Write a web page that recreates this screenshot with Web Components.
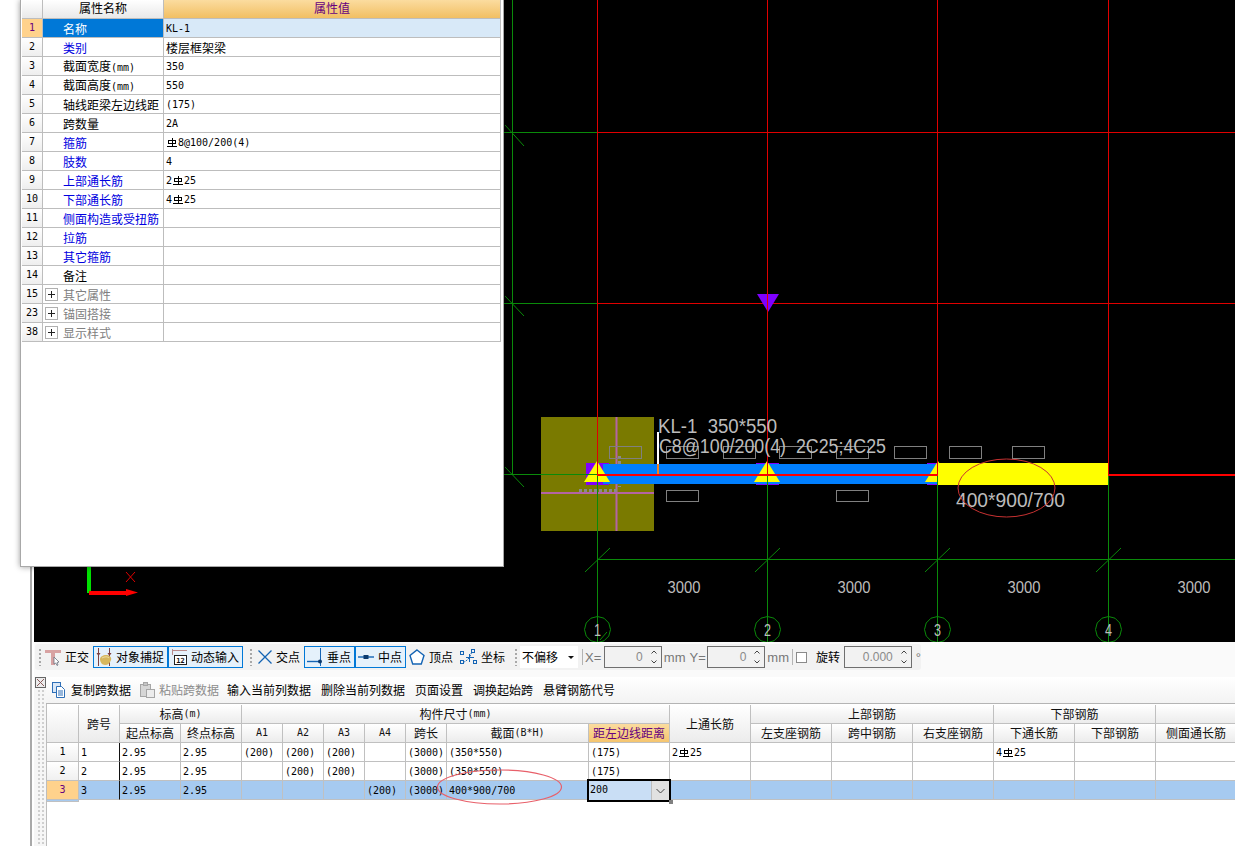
<!DOCTYPE html>
<html lang="zh">
<head>
<meta charset="utf-8">
<title>KL-1</title>
<style>
  html, body { margin: 0; height: 100%; overflow: hidden; background: #fff; }
</style>
</head>
<body>
<cad-app></cad-app>
<script>
const CJK = '"Noto Sans CJK SC", "Liberation Sans", sans-serif';
const MONO_CSS = `.m { font: 10px/1 "DejaVu Sans Mono", "Liberation Mono", monospace; opacity: .99; }`;

// ascii runs go in the small mono font, Φ becomes the rebar grade mark
function fmt(text) {
  return text
    .replace(/[!-~]+/g, (s) => `<span class="m">${s}</span>`)
    .replace(/Φ/g, "<rebar-mark></rebar-mark>");
}

class RebarMark extends HTMLElement {
  constructor() {
    super();
    this.attachShadow({ mode: "open" });
    this.shadowRoot.innerHTML = `
      <style>
        :host { display: inline-block; width: 12px; height: 11px; vertical-align: -1px; }
        svg { display: block; }
      </style>
      <svg width="12" height="11" viewBox="0 0 12 11" shape-rendering="crispEdges" fill="none" stroke="#000">
        <path d="M2.5 3.5h7v3h-7zM6 1v9M1 9.5h10"/>
      </svg>
    `;
  }
}

class GripDots extends HTMLElement {
  constructor() {
    super();
    this.attachShadow({ mode: "open" });
    this.shadowRoot.innerHTML = `
      <style>
        :host {
          display: block;
          width: 3px;
          height: 17px;
          background: conic-gradient(#a8a8a8 25%, transparent 0) 0 0 / 3px 4px;
        }
      </style>
    `;
  }
}

class ToolBtn extends HTMLElement {
  constructor() {
    super();
    this.attachShadow({ mode: "open" });
    this.shadowRoot.innerHTML = `
      <style>
        :host {
          display: flex;
          flex: none;
          box-sizing: border-box;
          height: 22px;
          align-items: center;
          gap: 4px;
          padding: 0 2px;
          border: 1px solid transparent;
          font: 12px/1 ${CJK};
          color: #000;
          white-space: nowrap;
        }
        :host([active]) { border-color: #0078d7; background: #e5f1fb; }
        :host([disabled]) { color: #8c8c8c; }
        ::slotted(svg) { display: block; flex: none; }
      </style>
      <slot name="icon"></slot><slot></slot>
    `;
  }
}

class SpinBox extends HTMLElement {
  constructor() {
    super();
    this.attachShadow({ mode: "open" });
    this.shadowRoot.innerHTML = `
      <style>
        :host {
          display: flex;
          flex: none;
          box-sizing: border-box;
          height: 22px;
          align-items: center;
          justify-content: flex-end;
          border: 1px solid #6f6f6f;
          background: #f2f2f2;
          color: #8a8a8a;
          font: 12px/1 "Liberation Sans", sans-serif;
        }
        svg { display: block; margin: 0 1px 0 5px; }
      </style>
      <span>${this.getAttribute("value") || "0"}</span>
      <svg width="12" height="18" viewBox="0 0 12 18" fill="none" stroke="#444">
        <path d="M3.5 5.5L6 3l2.5 2.5M3.5 12.500L6 15l2.500-2.500"/>
      </svg>
    `;
  }
}

class SnapToolbar extends HTMLElement {
  constructor() {
    super();
    this.attachShadow({ mode: "open" });
    this.shadowRoot.innerHTML = `
      <style>
        :host {
          display: block;
          box-sizing: border-box;
          height: 35px;
          padding: 2px 0 0 1px;
          background: #fafafa;
        }
        .bar {
          display: flex;
          align-items: center;
          width: 886px;
          height: 26px;
          padding-left: 3px;
          box-sizing: border-box;
          background: #f2f2f2;
          border-radius: 3px;
          font: 13px/1 "Liberation Sans", sans-serif;
          color: #777;
          white-space: nowrap;
        }
        grip-dots { flex: none; }
        .drop {
          flex: none;
          box-sizing: border-box;
          display: flex;
          align-items: center;
          justify-content: space-between;
          width: 58px;
          height: 22px;
          padding: 0 4px 0 2px;
          background: #fff;
          font: 12px/1 ${CJK};
          color: #000;
        }
        .drop i { width: 0; height: 0; border: 3px solid transparent; border-top: 3px solid #111; border-bottom: 0; }
        .sep { flex: none; width: 1px; height: 16px; background: #b4b4b4; }
        .check { flex: none; box-sizing: border-box; width: 11px; height: 11px; border: 1px solid #8a8a8a; background: #fff; }
        .cn { font: 12px/1 ${CJK}; color: #000; }
      </style>
      <div class="bar">
        <grip-dots></grip-dots>
        <tool-btn style="width:51px;margin-left:1px">
          <svg slot="icon" width="16" height="18" viewBox="0 0 16 18">
            <path d="M0 2h16v3h-6v12H6V5H0z" fill="#d8a2a2"/>
            <path d="M9 9l5 5-2 .5 1 2.500-1 .5-1.200-2.500L9 16z" fill="#fff" stroke="#6b7280" stroke-width=".8"/>
          </svg>正交</tool-btn>
        <tool-btn active style="width:75px">
          <svg slot="icon" width="16" height="18" viewBox="0 0 16 18">
            <path d="M2.500 0v18M13.500 0v18" stroke="#7d4040" fill="none"/>
            <path d="M.5 5h4l-2 3zM11.500 5h4l-2 3z" fill="#7d4040"/>
            <path d="M4 11c0-2 3-4 6-4s6 2 5 5-3 5-6 5-5-3-5-6z" fill="#d6b75e"/>
            <path d="M6 10c2-1 5-2 7 0" stroke="#f1e3b0" fill="none"/>
          </svg>对象捕捉</tool-btn>
        <tool-btn active style="width:75px">
          <svg slot="icon" width="16" height="18" viewBox="0 0 16 18" shape-rendering="crispEdges">
            <path d="M1.500 1v6M.5 2.500h15" stroke="#b98a8a" fill="none"/>
            <rect x="3.500" y="7.500" width="12" height="9" fill="#fff" stroke="#222"/>
            <text x="9.500" y="15" text-anchor="middle" font-family="DejaVu Sans Mono" font-size="7" font-weight="700" fill="#111">12</text>
          </svg>动态输入</tool-btn>
        <grip-dots style="margin-left:6px"></grip-dots>
        <tool-btn style="width:50px;margin-left:2px;gap:3px">
          <svg slot="icon" width="16" height="16" viewBox="0 0 16 16">
            <path d="M1.500 1.500l13 13M14.500 1.500l-13 13" stroke="#1464b4" stroke-width="1.300"/>
          </svg>交点</tool-btn>
        <tool-btn active style="width:51px">
          <svg slot="icon" width="16" height="18" viewBox="0 0 16 18">
            <path d="M0 13.500h13" stroke="#1464b4" stroke-width="1.400"/>
            <path d="M13.500 0v18" stroke="#1464b4"/>
            <circle cx="13" cy="13.500" r="2" fill="#0b3a6e"/>
          </svg>垂点</tool-btn>
        <tool-btn active style="width:51px">
          <svg slot="icon" width="16" height="16" viewBox="0 0 16 16">
            <path d="M0 8h16" stroke="#1464b4" stroke-width="1.400"/>
            <rect x="5.500" y="6" width="5" height="4" fill="#0b3a6e"/>
          </svg>中点</tool-btn>
        <tool-btn style="width:51px">
          <svg slot="icon" width="16" height="16" viewBox="0 0 16 16">
            <path d="M8 1l7 5.500-2.700 8.500H3.700L1 6.500z" fill="#fff" stroke="#1464b4" stroke-width="1.400"/>
          </svg>顶点</tool-btn>
        <tool-btn style="width:51px">
          <svg slot="icon" width="17" height="18" viewBox="0 0 17 18" fill="none" stroke="#1464b4" stroke-width="1">
            <path d="M3 14.500C7 13 10 10 12 3" stroke-dasharray="2 1"/>
            <path d="M6 9.500h8M9.500 6v8"/>
            <rect x=".5" y="12.500" width="3" height="3"/>
            <rect x="11.500" y="1.500" width="3" height="3"/>
            <rect x="13.500" y="12.500" width="3" height="3"/>
            <rect x=".5" y="3.500" width="3" height="3"/>
          </svg>坐标</tool-btn>
        <grip-dots style="margin-left:6px"></grip-dots>
        <div class="drop" style="margin-left:3px">不偏移<i></i></div>
        <div class="sep" style="margin-left:4px"></div>
        <span style="margin-left:2px;width:19px">X=</span>
        <spin-box value="0" style="width:58px"></spin-box>
        <span style="margin-left:2px;width:26px">mm</span>
        <span style="width:18px">Y=</span>
        <spin-box value="0" style="width:58px"></spin-box>
        <span style="margin-left:2px;width:25px">mm</span>
        <div class="sep"></div>
        <div class="check" style="margin-left:3px"></div>
        <span class="cn" style="margin-left:9px;width:28px">旋转</span>
        <spin-box value="0.000" style="width:68px"></spin-box>
        <span style="margin-left:4px">°</span>
      </div>
    `;
  }
}

class SpanToolbar extends HTMLElement {
  constructor() {
    super();
    this.attachShadow({ mode: "open" });
    this.shadowRoot.innerHTML = `
      <style>
        :host {
          display: flex;
          align-items: center;
          box-sizing: border-box;
          height: 27px;
          padding: 0 0 0 2px;
          background: linear-gradient(#fff, #f3f3f3);
          border-bottom: 1px solid #b4b4b4;
        }
      </style>
      <tool-btn style="width:88px">
        <svg slot="icon" width="16" height="16" viewBox="0 0 16 16">
          <rect x="1.500" y=".5" width="8" height="10" fill="#dbe8f7" stroke="#2e6fb7"/>
          <path d="M5.500 4.500h5l3 3v8h-8z" fill="#fff" stroke="#2e6fb7"/>
          <path d="M7 9h5M7 11h5M7 13h5" stroke="#2e6fb7"/>
        </svg>复制跨数据</tool-btn>
      <tool-btn disabled style="width:88px">
        <svg slot="icon" width="16" height="16" viewBox="0 0 16 16">
          <rect x="1.500" y="2.500" width="10" height="12" fill="#d6d6d6" stroke="#a6a6a6"/>
          <rect x="4.500" y=".5" width="4" height="3" fill="#c4c4c4" stroke="#a6a6a6"/>
          <rect x="7.500" y="7.500" width="8" height="8" fill="#ececec" stroke="#a6a6a6"/>
        </svg>粘贴跨数据</tool-btn>
      <tool-btn style="width:94px">输入当前列数据</tool-btn>
      <tool-btn style="width:94px">删除当前列数据</tool-btn>
      <tool-btn style="width:58px">页面设置</tool-btn>
      <tool-btn style="width:70px">调换起始跨</tool-btn>
      <tool-btn style="width:78px">悬臂钢筋代号</tool-btn>
    `;
  }
}

class SpanGrid extends HTMLElement {
  constructor() {
    super();
    this.attachShadow({ mode: "open" });

    const heads = [
      ["", 1, 1, 1, 2],
      ["跨号", 2, 1, 1, 2],
      ["标高(m)", 3, 1, 2, 1],
      ["构件尺寸(mm)", 5, 1, 7, 1],
      ["上通长筋", 12, 1, 1, 2],
      ["上部钢筋", 13, 1, 3, 1],
      ["下部钢筋", 16, 1, 2, 1],
      ["", 18, 1, 1, 1],
      ["起点标高", 3, 2],
      ["终点标高", 4, 2],
      ["A1", 5, 2],
      ["A2", 6, 2],
      ["A3", 7, 2],
      ["A4", 8, 2],
      ["跨长", 9, 2],
      ["截面(B*H)", 10, 2],
      ["距左边线距离", 11, 2, 1, 1, "pick"],
      ["左支座钢筋", 13, 2],
      ["跨中钢筋", 14, 2],
      ["右支座钢筋", 15, 2],
      ["下通长筋", 16, 2],
      ["下部钢筋", 17, 2],
      ["侧面通长筋", 18, 2],
    ];
    const rows = [
      ["1", "1", "2.95", "2.95", "(200)", "(200)", "(200)", "", "(3000)", "(350*550)", "(175)", "2Φ25", "", "", "", "4Φ25", "", ""],
      ["2", "2", "2.95", "2.95", "", "(200)", "(200)", "", "(3000)", "(350*550)", "(175)", "", "", "", "", "", "", ""],
      ["3", "3", "2.95", "2.95", "", "", "", "(200)", "(3000)", "400*900/700", "", "", "", "", "", "", "", ""],
    ];

    let cells = "";
    for (const [text, col, row, cs = 1, rs = 1, cls = ""] of heads) {
      cells += `<div class="h ${cls}" style="grid-area:${row}/${col}/span ${rs}/span ${cs}">${fmt(text)}</div>`;
    }
    rows.forEach((row, r) => {
      row.forEach((text, c) => {
        let cls = c === 0 ? "n" : "c";
        if (r === 2) cls += " sel";
        if (c === 1) cls += " froz";
        cells += `<div class="${cls}">${fmt(text)}</div>`;
      });
    });

    this.shadowRoot.innerHTML = `
      <style>
        :host {
          display: block;
          position: relative;
          height: 143px;
          overflow: hidden;
          padding-top: 1px;
          box-sizing: border-box;
          background: #fff;
          border-left: 1px solid #bdbdbd;
          font: 12px/1 ${CJK};
          color: #000;
        }
        ${MONO_CSS}
        .grid {
          display: grid;
          grid-template-columns: 32px 41px 61px 61px 41px 41px 41px 41px 41px 142px 81px 81px 81px 81px 81px 81px 81px 81px;
          grid-template-rows: 19px 19px 19px 19px 19px;
          width: max-content;
        }
        .grid > div {
          box-sizing: border-box;
          display: flex;
          align-items: center;
          border-right: 1px solid #c0c0c0;
          border-bottom: 1px solid #c0c0c0;
          white-space: nowrap;
          overflow: hidden;
        }
        .h { justify-content: center; background: linear-gradient(#fff, #ececec); color: #111; }
        .pick { background: linear-gradient(#fbdc9f, #f5c56f); color: #660080; }
        .n { justify-content: center; background: linear-gradient(#fff, #f0f0f0); }
        .c { padding: 1px 0 0 2px; background: #fff; }
        .sel { background: #a6caf0; }
        .n.sel { background: #ffd28c; color: #660080; }
        .froz { border-right-color: #111 !important; }
        .edit {
          grid-area: 5 / 11;
          box-sizing: border-box;
          margin: -2px -1px -2px -2px;
          z-index: 1;
          position: relative;
          padding-left: 1px;
          align-items: center;
          border: 2px solid #000 !important;
          background: #c9def5;
          overflow: visible !important;
        }
        .edit .m { margin-bottom: 2px; }
        .edit b {
          margin-left: auto;
          width: 17px;
          height: 100%;
          display: flex;
          align-items: center;
          justify-content: center;
          background: #e1e1e1;
          border-left: 1px solid #bdbdbd;
        }
        .edit i {
          position: absolute;
          right: -4px;
          bottom: -4px;
          width: 4px;
          height: 4px;
          background: #808080;
        }
        .oval { position: absolute; left: 0; top: 0; pointer-events: none; }
      </style>
      <div class="grid">
        ${cells}
        <div class="edit"><span class="m">200</span>
          <b><svg width="9" height="6" viewBox="0 0 9 6" fill="none" stroke="#444"><path d="M.5 1L4.500 5 8.500 1"/></svg></b>
          <i></i>
        </div>
      </div>
      <svg class="oval" width="600" height="143" fill="none">
        <ellipse cx="452.500" cy="83" rx="62" ry="17" stroke="#e8606a" stroke-width="1.200"/>
      </svg>
    `;
  }
}

class PropPanel extends HTMLElement {
  constructor() {
    super();
    this.attachShadow({ mode: "open" });

    const rows = [
      ["1", "名称", "KL-1", "sel"],
      ["2", "类别", "楼层框架梁", "blue"],
      ["3", "截面宽度(mm)", "350"],
      ["4", "截面高度(mm)", "550"],
      ["5", "轴线距梁左边线距", "(175)"],
      ["6", "跨数量", "2A"],
      ["7", "箍筋", "Φ8@100/200(4)", "blue"],
      ["8", "肢数", "4", "blue"],
      ["9", "上部通长筋", "2Φ25", "blue"],
      ["10", "下部通长筋", "4Φ25", "blue"],
      ["11", "侧面构造或受扭筋", "", "blue"],
      ["12", "拉筋", "", "blue"],
      ["13", "其它箍筋", "", "blue"],
      ["14", "备注", ""],
      ["15", "其它属性", "", "fold"],
      ["23", "锚固搭接", "", "fold"],
      ["38", "显示样式", "", "fold"],
    ];
    const plus = `<svg width="13" height="13" viewBox="0 0 13 13" fill="none" shape-rendering="crispEdges"><rect x=".5" y=".5" width="12" height="12" stroke="#b0b0b0"/><path d="M3 6.500h7M6.500 3v7" stroke="#222"/></svg>`;

    const body = rows.map(([num, name, value, kind = ""]) => `
      <div class="n ${kind}">${fmt(num)}</div>
      <div class="name ${kind}">${kind === "fold" ? plus : ""}<span>${fmt(name)}</span></div>
      <div class="v ${kind}">${fmt(value)}</div>
    `).join("");

    this.shadowRoot.innerHTML = `
      <style>
        :host {
          display: block;
          position: absolute;
          left: 20px;
          top: 0;
          z-index: 5;
          box-sizing: border-box;
          width: 484px;
          height: 567px;
          padding-left: 1px;
          background: #fff;
          border: 1px solid #a8a8a8;
          border-top: 0;
          box-shadow: 0 0 6px rgba(0, 0, 0, .4);
          font: 12px/1 ${CJK};
          color: #000;
        }
        ${MONO_CSS}
        .grid {
          display: grid;
          grid-template-columns: 21px 121px 337px;
          grid-auto-rows: 19px;
        }
        .grid > div {
          box-sizing: border-box;
          display: flex;
          align-items: center;
          border-right: 1px solid #bdbdbd;
          border-bottom: 1px solid #bdbdbd;
          white-space: nowrap;
        }
        .h { justify-content: center; padding-bottom: 2px; background: linear-gradient(#fff, #e9e9e9); }
        .hv { justify-content: center; padding-bottom: 2px; background: linear-gradient(#fbdc9f, #f2bf63); color: #660080; }
        .n { justify-content: center; background: linear-gradient(#fff, #eee); }
        .n.sel { background: #ffd28c; color: #660080; }
        .name { padding: 1px 0 0 20px; gap: 5px; }
        .name.fold { padding-left: 2px; color: #808080; }
        .name.blue { color: #0000e0; }
        .name.sel { background: #0078d7; color: #fff; }
        .v { padding: 1px 0 0 2px; }
        .v.sel { background: #d8e9f8; }
      </style>
      <div class="grid">
        <div class="h"></div>
        <div class="h">属性名称</div>
        <div class="hv">属性值</div>
        ${body}
      </div>
    `;
  }
}

class CadCanvas extends HTMLElement {
  constructor() {
    super();
    this.attachShadow({ mode: "open" });

    const axes = [597.5, 767.5, 937.5, 1108.5];
    const ring = (cx, cy, r) => {
      const pts = [];
      for (let i = 0; i < 12; i++) {
        const a = (i * Math.PI) / 6;
        pts.push(`${(cx + r * Math.sin(a)).toFixed(1)},${(cy + r * Math.cos(a)).toFixed(1)}`);
      }
      return pts.join(" ");
    };
    const boxes = [
      [609, 446], [666, 446], [723, 446], [779, 446], [836, 446], [894, 446], [949, 446], [1012, 446],
      [666, 490], [836, 490],
    ];
    const tri = (x) => `<polygon points="${x},461 ${x + 13},482 ${x - 13},482" fill="#ff0"/>`;

    this.shadowRoot.innerHTML = `
      <style>
        :host { display: block; height: 642px; background: #000; overflow: hidden; }
        svg { display: block; }
        text { font-family: "Liberation Sans", sans-serif; fill: #bcbcbc; white-space: pre; }
      </style>
      <svg width="1201" height="642" viewBox="34 0 1201 642">
        <rect x="541" y="417" width="113" height="114" fill="#7a7a00"/>
        <path d="M616.500 417v114M541 493h113" stroke="#b364a5" stroke-width="2"/>
        <path d="M619.500 456v31M579 490.500h39" stroke="#8a8a8a" stroke-width="3" stroke-dasharray="3 2"/>

        <g fill="#7f00ff">
          <rect x="586" y="463" width="23" height="22"/>
          <rect x="756" y="463" width="23" height="22"/>
          <rect x="927" y="463" width="12" height="22"/>
        </g>
        <rect x="603" y="464" width="335" height="20" fill="#007fff"/>
        ${tri(597)}${tri(767)}${tri(938)}
        <rect x="657" y="432" width="2" height="32" fill="#fff"/>
        <rect x="657" y="464" width="2" height="10" fill="#f08020"/>

        <g fill="none" stroke="#0a8a0a" shape-rendering="crispEdges">
          <path d="M512.500 0V475M34 132.500H597M34 303.500H597M34 474.500H597M597 559.500H1235"/>
          ${axes.map((x) => `<path d="M${x} 475V642"/>`).join("")}
        </g>
        <g fill="none" stroke="#0a8a0a">
          <path d="M505 125l19 21M505 296l19 20M505 467l19 20"/>
          ${axes.map((x) => `<path d="M${x - 12.500} 572l25-24"/>`).join("")}
          ${axes.map((x) => `<polygon points="${ring(x, 629.500, 13)}"/>`).join("")}
          <path d="M600 640l7-8"/>
        </g>
        <g fill="none" stroke="#e00000" shape-rendering="crispEdges">
          ${axes.map((x) => `<path d="M${x} 0V475"/>`).join("")}
          <path d="M597 132.500H1235M597 303.500H1235"/>
          <path d="M597 475H1235" stroke="#ff0000" stroke-width="2"/>
        </g>
        <polygon points="757,294 779,294 768,312" fill="#7f00ff"/>
        <path d="M767.500 294V312" stroke="#e00000" shape-rendering="crispEdges"/>
        <rect x="938" y="463" width="170" height="22" fill="#ff0"/>
        <path d="M1108.500 463V475" stroke="#e00000" shape-rendering="crispEdges"/>

        <g fill="none" stroke="#808080" shape-rendering="crispEdges">
          ${boxes.map(([x, y]) => `<rect x="${x + 0.5}" y="${y + 0.5}" width="32" height="${y === 446 ? 12 : 11}"/>`).join("")}
        </g>

        <text x="658" y="433" font-size="19.500" textLength="119" lengthAdjust="spacingAndGlyphs">KL-1  350*550</text>
        <text x="659" y="453" font-size="19.500" textLength="227" lengthAdjust="spacingAndGlyphs">C8@100/200(4)  2C25;4C25</text>
        <text x="956" y="507" font-size="19.500" textLength="109" lengthAdjust="spacingAndGlyphs">400*900/700</text>
        <ellipse cx="1006.500" cy="488" rx="48.500" ry="29" fill="none" stroke="#c83232"/>

        ${[684, 854, 1024, 1194].map((x) => `<text x="${x - 16.500}" y="593" font-size="17" textLength="33" lengthAdjust="spacingAndGlyphs">3000</text>`).join("")}
        ${axes.map((x, i) => `<text x="${x - 3.500}" y="636" font-size="16" textLength="7" lengthAdjust="spacingAndGlyphs">${i + 1}</text>`).join("")}

        <rect x="87" y="567" width="4" height="26" fill="#00e000"/>
        <path d="M89 591h37v-2l12 3.500-12 3.500v-1H89z" fill="#ff0000"/>
        <path d="M126 572l9 10M135 572l-9 10" stroke="#e00000" fill="none"/>
      </svg>
    `;
  }
}

class CadApp extends HTMLElement {
  constructor() {
    super();
    this.attachShadow({ mode: "open" });
    this.shadowRoot.innerHTML = `
      <style>
        :host {
          display: grid;
          position: relative;
          grid-template-columns: 34px 1fr;
          width: 1235px;
          height: 846px;
          overflow: hidden;
          background: #fff;
        }
        .edge { border-right: 2px solid #a9a9a9; margin-right: 2px; background: #fff; }
        .main { display: flex; flex-direction: column; min-width: 0; }
        .pane { display: grid; grid-template-columns: 12px 1fr; flex: 1; min-height: 0; }
        .gutter { position: relative; background: #f6f6f6; }
        .gutter svg { display: block; margin: 0 0 0 1px; }
        .dots {
          margin: 2px 0 0 2px;
          width: 9px;
          height: 156px;
          background: conic-gradient(#cfcfcf 25%, transparent 0) 0 0 / 4px 4px;
        }
      </style>
      <div class="edge"></div>
      <div class="main">
        <cad-canvas></cad-canvas>
        <snap-toolbar></snap-toolbar>
        <div class="pane">
          <div class="gutter">
            <svg width="11" height="11" viewBox="0 0 11 11" shape-rendering="crispEdges">
              <rect x=".5" y=".5" width="10" height="10" fill="#ececec" stroke="#666"/>
              <path d="M2 2l7 7M9 2L2 9" stroke="#8a5a5a"/>
            </svg>
            <div class="dots"></div>
          </div>
          <div>
            <span-toolbar></span-toolbar>
            <span-grid></span-grid>
          </div>
        </div>
      </div>
      <prop-panel></prop-panel>
    `;
  }
}

customElements.define("rebar-mark", RebarMark);
customElements.define("grip-dots", GripDots);
customElements.define("tool-btn", ToolBtn);
customElements.define("spin-box", SpinBox);
customElements.define("snap-toolbar", SnapToolbar);
customElements.define("span-toolbar", SpanToolbar);
customElements.define("span-grid", SpanGrid);
customElements.define("prop-panel", PropPanel);
customElements.define("cad-canvas", CadCanvas);
customElements.define("cad-app", CadApp);
</script>
</body>
</html>
